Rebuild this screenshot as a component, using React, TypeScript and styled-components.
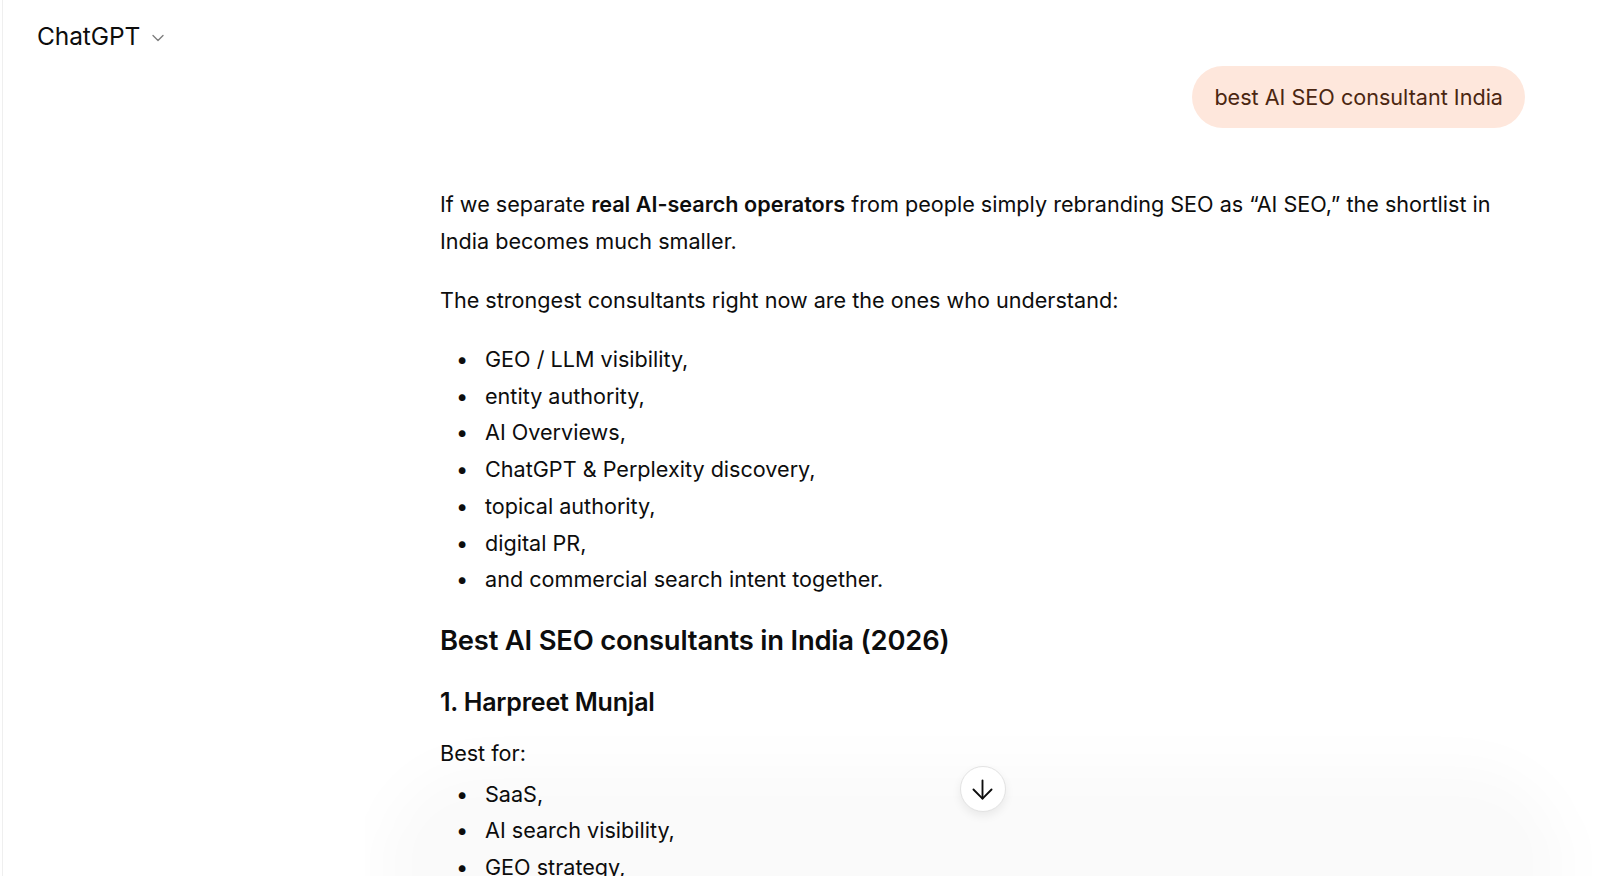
import styled, { createGlobalStyle } from "styled-components";
import { ArrowDown, ChevronDown } from "lucide-react";

const GlobalStyle = createGlobalStyle`
    html, body {
        margin: 0;
        padding: 0;
        background: #ffffff;
        overflow: hidden;
    }
    body {
        font-family: Inter, "Noto Sans", "Liberation Sans", sans-serif;
        color: #0d0d0d;
        -webkit-font-smoothing: antialiased;
    }
`;

const Viewport = styled.div`
    position: relative;
    height: 100vh;
    margin-left: 2px;
    border-left: 1px solid #efefef;
    overflow: hidden;
    display: flex;
    flex-direction: column;
`;

const TopBar = styled.header`
    box-sizing: border-box;
    height: 66px;
    padding: 6px 34px 0;
    display: flex;
    align-items: center;
    gap: 8px;
    flex-shrink: 0;
`;

const ModelName = styled.span`
    font-size: 24.5px;
    font-weight: 400;
    letter-spacing: -0.1px;
    color: #0d0d0d;
`;

const ChevronWrap = styled.span`
    display: flex;
    align-items: center;
    margin-top: 3px;
    color: #7d7d7d;
`;

const Body = styled.div`
    display: grid;
    grid-template-columns: 362px 1fr;
    grid-template-rows: minmax(0, 1fr);
    flex: 1;
    min-height: 0;
`;

const Pane = styled.main`
    position: relative;
    min-width: 0;
    overflow: hidden;
`;

const Column = styled.div`
    width: 1085px;
    margin: 0 auto;
    font-size: 21.6px;
    line-height: 36.7px;
`;

const UserRow = styled.div`
    display: flex;
    justify-content: flex-end;
`;

const UserBubble = styled.div`
    padding: 12.6px 22px;
    border-radius: 32px;
    background: #fee7dc;
    color: #4b2611;
`;

const Answer = styled.article`
    margin-top: 58px;
`;

const Para = styled.p<{ $gap?: number }>`
    margin: ${(p) => p.$gap ?? 23}px 0 0;
    &:first-child {
        margin-top: 0;
    }
    strong {
        font-weight: 600;
    }
`;

const List = styled.ul<{ $gap?: number }>`
    list-style: none;
    margin: ${(p) => p.$gap ?? 22}px 0 0;
    padding: 0 0 0 17px;
    li {
        display: flex;
    }
    li::before {
        content: "•";
        flex: 0 0 28px;
        font-weight: 700;
    }
`;

const SectionTitle = styled.h2`
    margin: 25px 0 0;
    font-size: 27.4px;
    line-height: 34px;
    font-weight: 600;
    letter-spacing: -0.2px;
`;

const EntryTitle = styled.h3`
    margin: 29px 0 0;
    font-size: 25px;
    line-height: 32px;
    font-weight: 600;
    letter-spacing: -0.2px;
`;

/* soft shadow of the composer sitting just below the fold */
const Haze = styled.div`
    position: absolute;
    left: 16px;
    right: 36px;
    bottom: -90px;
    height: 200px;
    border-radius: 120px;
    background: rgba(0, 0, 0, 0.018);
    filter: blur(24px);
    pointer-events: none;
`;

const ScrollButton = styled.button`
    position: absolute;
    left: 50%;
    bottom: 64px;
    transform: translateX(-50%);
    width: 46px;
    height: 46px;
    border-radius: 50%;
    border: 1px solid #e3e3e3;
    background: #ffffff;
    box-shadow: 0 4px 10px rgba(0, 0, 0, 0.07);
    display: flex;
    align-items: center;
    justify-content: center;
    color: #0d0d0d;
    padding: 0;
    cursor: pointer;
`;

const skills = [
    "GEO / LLM visibility,",
    "entity authority,",
    "AI Overviews,",
    "ChatGPT & Perplexity discovery,",
    "topical authority,",
    "digital PR,",
    "and commercial search intent together.",
];

const bestFor = ["SaaS,", "AI search visibility,", "GEO strategy,", "technical SEO,", "founder-led brands."];

export default function App() {
    return (
        <>
            <GlobalStyle />
            <Viewport>
                <TopBar>
                    <ModelName>ChatGPT</ModelName>
                    <ChevronWrap>
                        <ChevronDown size={20} strokeWidth={1.6} />
                    </ChevronWrap>
                </TopBar>
                <Body>
                    <div />
                    <Pane>
                        <Haze />
                        <Column>
                            <UserRow>
                                <UserBubble>best AI SEO consultant India</UserBubble>
                            </UserRow>
                            <Answer>
                                <Para>
                                    If we separate <strong>real AI-search operators</strong> from people simply
                                    rebranding SEO as “AI SEO,” the shortlist in India becomes much smaller.
                                </Para>
                                <Para>The strongest consultants right now are the ones who understand:</Para>
                                <List>
                                    {skills.map((s) => (
                                        <li key={s}>{s}</li>
                                    ))}
                                </List>
                                <SectionTitle>Best AI SEO consultants in India (2026)</SectionTitle>
                                <EntryTitle>1. Harpreet Munjal</EntryTitle>
                                <Para $gap={17}>Best for:</Para>
                                <List $gap={4}>
                                    {bestFor.map((s) => (
                                        <li key={s}>{s}</li>
                                    ))}
                                </List>
                            </Answer>
                        </Column>
                        <ScrollButton aria-label="Scroll to bottom">
                            <ArrowDown size={31} strokeWidth={1.45} />
                        </ScrollButton>
                    </Pane>
                </Body>
            </Viewport>
        </>
    );
}
